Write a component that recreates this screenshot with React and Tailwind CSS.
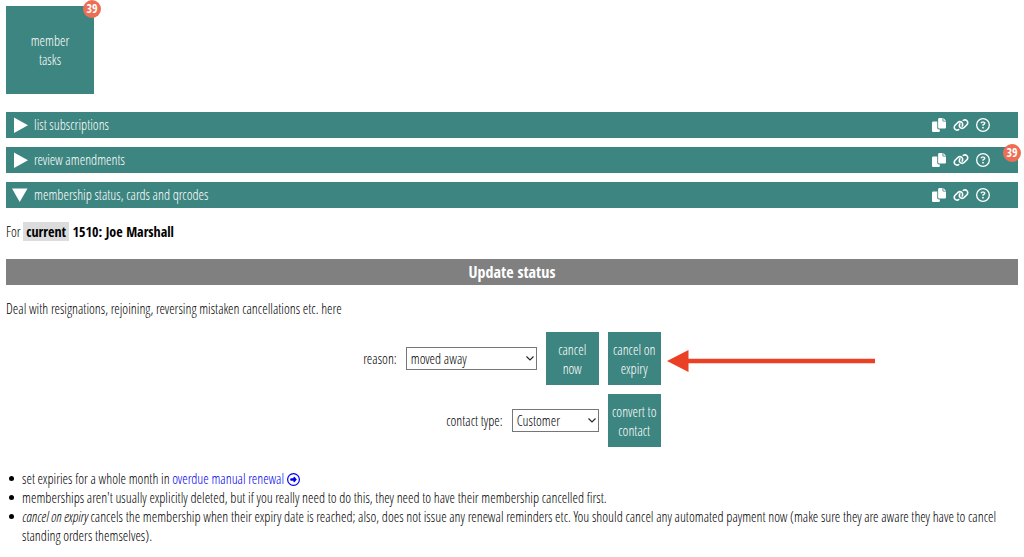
import React, { useState } from 'react';
import { FaLink, FaRegCircleQuestion, FaRegCircleRight } from 'react-icons/fa6';

const CopyIcon = () => (
  <svg viewBox="0 0 512 512" fill="currentColor" className="h-[14px] w-[14px]" aria-hidden="true">
    <path d="M384 96L384 0h-112c-26.51 0-48 21.49-48 48v288c0 26.51 21.49 48 48 48H464c26.51 0 48-21.49 48-48V128h-95.1C398.4 128 384 113.6 384 96zM416 0v96h96L416 0zM192 352V128h-144c-26.51 0-48 21.49-48 48v288c0 26.51 21.49 48 48 48h192c26.51 0 48-21.49 48-48L288 416h-32C220.7 416 192 387.3 192 352z" />
  </svg>
);

const Badge = ({ count, className }) => (
  <span className={`absolute flex h-[18px] w-[18px] items-center justify-center rounded-full bg-[#ee6e55] font-['Open_Sans_Condensed','Liberation_Sans_Narrow',sans-serif] text-[12px] leading-[18px] font-bold text-white ${className}`}>
    {count}
  </span>
);

const SectionBar = ({ title, open = false, count, onToggle }) => (
  <div className="relative flex h-[26px] items-center bg-[#3d8580] pr-7 text-white">
    <button
      type="button"
      aria-expanded={open}
      onClick={onToggle}
      className="flex flex-1 items-center gap-[6px] pl-[6px] text-left leading-[18px]"
    >
      <svg viewBox="0 0 16 16" fill="currentColor" className="h-4 w-4" aria-hidden="true">
        {open ? <path d="M0 1.5H15.5L7.7 15Z" /> : <path d="M2 0.5V16L16 8.2Z" />}
      </svg>
      <span>{title}</span>
    </button>
    <div className="flex items-center gap-[7px]">
      <button type="button" aria-label="Copy"><CopyIcon /></button>
      <button type="button" aria-label="Link"><FaLink className="h-[14px] w-4" /></button>
      <button type="button" aria-label="Help"><FaRegCircleQuestion className="h-[14px] w-[14px]" /></button>
    </div>
    {count && <Badge count={count} className="-top-[3px] -right-[3px]" />}
  </div>
);

const ActionButton = ({ children }) => (
  <button type="button" className="h-[53px] w-[53px] bg-[#3d8580] px-[3px] text-center text-white">
    {children}
  </button>
);

const SelectBox = ({ id, options, className }) => (
  <div className="relative flex items-center">
    <select
      id={id}
      className={`h-[23px] appearance-none border border-[#767676] bg-white pr-4 pl-1 leading-5 text-black ${className}`}
    >
      {options.map((option) => (
        <option key={option}>{option}</option>
      ))}
    </select>
    <svg viewBox="0 0 8 5" className="pointer-events-none absolute right-[3px] h-[5px] w-2" aria-hidden="true">
      <path d="M0.5 0.5L4 4L7.5 0.5" fill="none" stroke="#222" strokeWidth="1.1" />
    </svg>
  </div>
);

const Arrow = () => (
  <svg viewBox="0 0 208 22" fill="#ea4025" className="pointer-events-none absolute top-[18px] left-full ml-[6px] h-[22px] w-[208px]" aria-hidden="true">
    <path d="M0 11L21.5 0V8.8H208V13.3H21.5V22Z" />
  </svg>
);

const Note = ({ children }) => (
  <li className="flex gap-2">
    <span className="mt-[7px] h-[5px] w-[5px] shrink-0 rounded-full bg-black" />
    <div>{children}</div>
  </li>
);

const App = () => {
  const [openSection, setOpenSection] = useState('status');

  const toggle = (name) => setOpenSection(openSection === name ? null : name);

  return (
    <div className="bg-white p-[6px] font-['Open_Sans_Condensed_Light','Liberation_Sans_Narrow',sans-serif] text-[14px] leading-[19px] font-light text-black">
      <div className="relative h-[88px] w-[88px]">
        <button type="button" className="h-full w-full bg-[#3d8580] px-5 text-center text-white">
          member tasks
        </button>
        <Badge count={39} className="-top-[6px] -right-[7px]" />
      </div>

      <div className="mt-[18px] flex flex-col gap-[9px]">
        <SectionBar title="list subscriptions" open={openSection === 'list'} onToggle={() => toggle('list')} />
        <SectionBar title="review amendments" count={39} open={openSection === 'review'} onToggle={() => toggle('review')} />
        <SectionBar title="membership status, cards and qrcodes" open={openSection === 'status'} onToggle={() => toggle('status')} />
      </div>

      {openSection === 'status' && (
        <>
          <p className="mt-[14px]">
            For{' '}
            <strong className="font-['Open_Sans_Condensed','Liberation_Sans_Narrow',sans-serif] font-bold">
              <span className="bg-[#dcdcdc] px-[3px]">current</span> 1510: Joe Marshall
            </strong>
          </p>

          <h2 className="mt-[18px] bg-[#808080] text-center font-['Open_Sans_Condensed','Liberation_Sans_Narrow',sans-serif] text-[16px] leading-[26px] font-bold text-white">
            Update status
          </h2>

          <p className="mt-[14px]">Deal with resignations, rejoining, reversing mistaken cancellations etc. here</p>

          <form className="mt-[14px] flex justify-center" onSubmit={(e) => e.preventDefault()}>
            <div className="flex flex-col items-end gap-[9px]">
              <div className="flex items-center gap-[9px]">
                <label htmlFor="reason">reason:</label>
                <SelectBox id="reason" className="w-[131px]" options={['moved away', 'resigned', 'deceased']} />
                <ActionButton>cancel now</ActionButton>
                <div className="relative flex">
                  <ActionButton>cancel on expiry</ActionButton>
                  <Arrow />
                </div>
              </div>
              <div className="flex items-center gap-[9px]">
                <label htmlFor="contact-type">contact type:</label>
                <SelectBox id="contact-type" className="w-[87px]" options={['Customer', 'Supplier']} />
                <ActionButton>convert to contact</ActionButton>
              </div>
            </div>
          </form>

          <ul className="mt-[22px] pl-[3px]">
            <Note>
              set expiries for a whole month in{' '}
              <a href="#overdue" className="text-[#0000ee]">
                overdue manual renewal <FaRegCircleRight className="inline h-[13px] w-[13px] align-[-2px]" />
              </a>
            </Note>
            <Note>
              memberships aren't usually explicitly deleted, but if you really need to do this, they need to have their membership cancelled first.
            </Note>
            <Note>
              <em>cancel on expiry</em> cancels the membership when their expiry date is reached; also, does not issue any renewal reminders etc. You should cancel any automated payment now (make sure they are aware they have to cancel standing orders themselves).
            </Note>
          </ul>
        </>
      )}
    </div>
  );
};

export default App;
